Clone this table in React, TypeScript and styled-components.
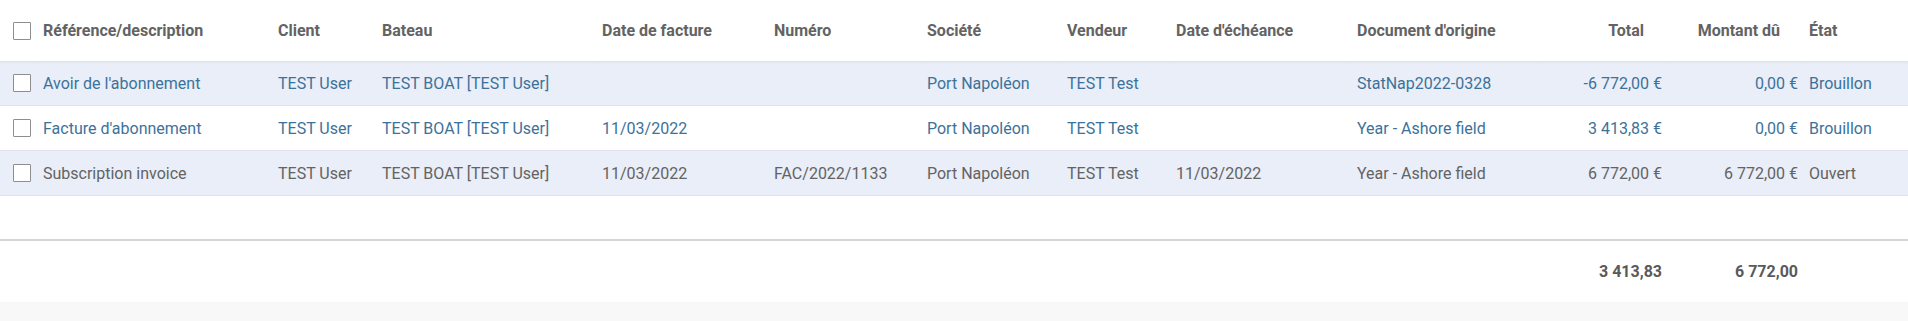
import { createGlobalStyle, styled } from "styled-components";

const GlobalStyle = createGlobalStyle`
  html, body {
    margin: 0;
    padding: 0;
    background: #f8f8f8;
  }
  body {
    font-family: Roboto, "Liberation Sans", sans-serif;
    font-size: 16px;
  }
`;

const Sheet = styled.div`
  background: #fff;
  width: 1908px;
`;

const Table = styled.table`
  width: 1908px;
  table-layout: fixed;
  border-collapse: separate;
  border-spacing: 0;
`;

const HeadCell = styled.th<{ $num?: boolean }>`
  height: 61px;
  padding: 0 ${(p) => (p.$num ? "23px" : "5px")} 0 6px;
  text-align: ${(p) => (p.$num ? "right" : "left")};
  font-weight: 700;
  color: #636363;
  white-space: nowrap;
  overflow: hidden;
  vertical-align: middle;
  box-sizing: border-box;
`;

const Row = styled.tr<{ $shade?: boolean; $first?: boolean }>`
  background: ${(p) => (p.$shade ? "#e9eef8" : "#fff")};
  td {
    box-shadow: ${(p) => (p.$first ? "inset 0 3px 3px -2px rgba(0, 0, 0, 0.07)" : "none")};
  }
`;

const Cell = styled.td<{ $num?: boolean; $tone: "info" | "plain" }>`
  height: 45px;
  box-sizing: border-box;
  border-bottom: 1px solid #dfe2e8;
  padding: 0 5px 0 6px;
  text-align: ${(p) => (p.$num ? "right" : "left")};
  color: ${(p) => (p.$tone === "info" ? "#3c729a" : "#636363")};
  white-space: nowrap;
  overflow: hidden;
  vertical-align: middle;
`;

const SelectCell = styled.td<{ $head?: boolean }>`
  padding: 0 0 0 13px;
  vertical-align: middle;
  box-sizing: border-box;
  height: ${(p) => (p.$head ? "61px" : "45px")};
  border-bottom: ${(p) => (p.$head ? "none" : "1px solid #dfe2e8")};
`;

const Box = styled.span`
  display: block;
  width: 18px;
  height: 18px;
  box-sizing: border-box;
  border: 1px solid #8e8e8e;
  border-radius: 1px;
  background: #fff;
`;

const Spacer = styled.td`
  height: 43px;
  padding: 0;
  background: #fff;
`;

const FootCell = styled.td`
  height: 61px;
  padding: 0 5px 0 6px;
  border-top: 2px solid #d6d6d6;
  text-align: right;
  font-weight: 700;
  color: #5a5a5a;
  vertical-align: middle;
`;

const widths = [37, 235, 104, 220, 172, 153, 140, 109, 181, 190, 126, 136, 105];

type Line = {
  ref: string;
  client: string;
  boat: string;
  invDate: string;
  number: string;
  company: string;
  seller: string;
  due: string;
  origin: string;
  total: string;
  residual: string;
  state: string;
  draft: boolean;
};

const lines: Line[] = [
  {
    ref: "Avoir de l'abonnement",
    client: "TEST User",
    boat: "TEST BOAT [TEST User]",
    invDate: "",
    number: "",
    company: "Port Napoléon",
    seller: "TEST Test",
    due: "",
    origin: "StatNap2022-0328",
    total: "-6 772,00 €",
    residual: "0,00 €",
    state: "Brouillon",
    draft: true,
  },
  {
    ref: "Facture d'abonnement",
    client: "TEST User",
    boat: "TEST BOAT [TEST User]",
    invDate: "11/03/2022",
    number: "",
    company: "Port Napoléon",
    seller: "TEST Test",
    due: "",
    origin: "Year - Ashore field",
    total: "3 413,83 €",
    residual: "0,00 €",
    state: "Brouillon",
    draft: true,
  },
  {
    ref: "Subscription invoice",
    client: "TEST User",
    boat: "TEST BOAT [TEST User]",
    invDate: "11/03/2022",
    number: "FAC/2022/1133",
    company: "Port Napoléon",
    seller: "TEST Test",
    due: "11/03/2022",
    origin: "Year - Ashore field",
    total: "6 772,00 €",
    residual: "6 772,00 €",
    state: "Ouvert",
    draft: false,
  },
];

const headers: { label: string; num?: boolean }[] = [
  { label: "Référence/description" },
  { label: "Client" },
  { label: "Bateau" },
  { label: "Date de facture" },
  { label: "Numéro" },
  { label: "Société" },
  { label: "Vendeur" },
  { label: "Date d'échéance" },
  { label: "Document d'origine" },
  { label: "Total", num: true },
  { label: "Montant dû", num: true },
  { label: "État" },
];

export default function App() {
  return (
    <>
      <GlobalStyle />
      <Sheet>
        <Table>
          <colgroup>
            {widths.map((w, i) => (
              <col key={i} style={{ width: w }} />
            ))}
          </colgroup>
          <thead>
            <tr>
              <SelectCell $head>
                <Box />
              </SelectCell>
              {headers.map((h) => (
                <HeadCell key={h.label} $num={h.num}>
                  {h.label}
                </HeadCell>
              ))}
            </tr>
          </thead>
          <tbody>
            {lines.map((l, i) => {
              const tone = l.draft ? "info" : "plain";
              return (
                <Row key={l.ref} $shade={i !== 1} $first={i === 0}>
                  <SelectCell>
                    <Box />
                  </SelectCell>
                  <Cell $tone={tone}>{l.ref}</Cell>
                  <Cell $tone={tone}>{l.client}</Cell>
                  <Cell $tone={tone}>{l.boat}</Cell>
                  <Cell $tone={tone}>{l.invDate}</Cell>
                  <Cell $tone={tone}>{l.number}</Cell>
                  <Cell $tone={tone}>{l.company}</Cell>
                  <Cell $tone={tone}>{l.seller}</Cell>
                  <Cell $tone={tone}>{l.due}</Cell>
                  <Cell $tone={tone}>{l.origin}</Cell>
                  <Cell $tone={tone} $num>
                    {l.total}
                  </Cell>
                  <Cell $tone={tone} $num>
                    {l.residual}
                  </Cell>
                  <Cell $tone={tone}>{l.state}</Cell>
                </Row>
              );
            })}
            <tr>
              <Spacer colSpan={13} />
            </tr>
          </tbody>
          <tfoot>
            <tr>
              <FootCell colSpan={11}>3 413,83</FootCell>
              <FootCell>6 772,00</FootCell>
              <FootCell />
            </tr>
          </tfoot>
        </Table>
      </Sheet>
    </>
  );
}
